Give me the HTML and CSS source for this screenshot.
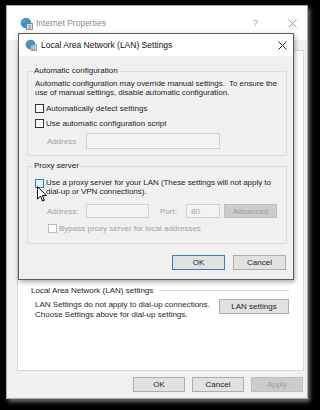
FILE: index.html
```html
<!DOCTYPE html>
<html lang="en">
<head>
    <meta charset="UTF-8">
    <title>Internet Properties</title>
    <link rel="stylesheet" href="styles.css">
</head>
<body>
    <div class="props">
        <div class="props-title">
            <svg class="app-icon" width="13" height="13" viewBox="0 0 13 13">
                <circle cx="6" cy="6" r="5.3" fill="#3d8fd6"/>
                <path d="M2 4 Q4 2 6 3 Q5 5 3 6 Z M6 7 Q8 6 9 8 Q8 10 6 10 Z" fill="#5fb84a"/>
                <rect x="6.5" y="6.5" width="6" height="6" fill="#e8e8e8" stroke="#7a7a7a" stroke-width="0.8"/>
                <path d="M7.8 8.3h3.4M7.8 9.8h3.4M7.8 11.2h3.4" stroke="#7a7a7a" stroke-width="0.7"/>
            </svg>
            <span class="props-name">Internet Properties</span>
            <span class="help">?</span>
            <svg class="close-x" width="9" height="9" viewBox="0 0 9 9">
                <path d="M0.5 0.5 8.5 8.5M8.5 0.5 0.5 8.5" stroke="#9a9a9a" stroke-width="1"/>
            </svg>
        </div>
        <div class="tab-strip"></div>
        <div class="panel">
            <div class="section-head">
                <span>Local Area Network (LAN) settings</span>
                <span class="rule"></span>
            </div>
            <div class="lan-row">
                <p>LAN Settings do not apply to dial-up connections.<br>Choose Settings above for dial-up settings.</p>
                <button class="btn lan-btn">LAN settings</button>
            </div>
        </div>
        <div class="props-buttons">
            <button class="btn">OK</button>
            <button class="btn">Cancel</button>
            <button class="btn" disabled>Apply</button>
        </div>

        <div class="lan-dialog">
            <div class="dialog-title">
                <svg class="app-icon" width="12" height="12" viewBox="0 0 13 13">
                    <circle cx="6" cy="6" r="5.3" fill="#3d8fd6"/>
                    <path d="M2 4 Q4 2 6 3 Q5 5 3 6 Z M6 7 Q8 6 9 8 Q8 10 6 10 Z" fill="#5fb84a"/>
                    <rect x="6.5" y="6.5" width="6" height="6" fill="#e8e8e8" stroke="#7a7a7a" stroke-width="0.8"/>
                    <path d="M7.8 8.3h3.4M7.8 9.8h3.4M7.8 11.2h3.4" stroke="#7a7a7a" stroke-width="0.7"/>
                </svg>
                <span class="dialog-name">Local Area Network (LAN) Settings</span>
                <svg class="close-x" width="9" height="9" viewBox="0 0 9 9">
                    <path d="M0.5 0.5 8.5 8.5M8.5 0.5 0.5 8.5" stroke="#222" stroke-width="1"/>
                </svg>
            </div>
            <div class="dialog-body">
                <fieldset class="group auto-group">
                    <legend>Automatic configuration</legend>
                    <p class="note">Automatic configuration may override manual settings.&nbsp; To ensure the<br>use of manual settings, disable automatic configuration.</p>
                    <label class="check-row first-check"><span class="box"></span>Automatically detect settings</label>
                    <label class="check-row"><span class="box"></span>Use automatic configuration script</label>
                    <div class="field-row">
                        <span class="field-label muted">Address</span>
                        <span class="input wide"></span>
                    </div>
                </fieldset>

                <fieldset class="group proxy-group">
                    <legend>Proxy server</legend>
                    <label class="check-row two-line"><span class="box hover"></span><span>Use a proxy server for your LAN (These settings will not apply to<br>dial-up or VPN connections).</span></label>
                    <div class="field-row proxy-row">
                        <span class="field-label muted">Address:</span>
                        <span class="input short"></span>
                        <span class="port-label muted">Port:</span>
                        <span class="input port muted">80</span>
                        <button class="btn adv-btn" disabled>Advanced</button>
                    </div>
                    <label class="check-row bypass muted"><span class="box faded"></span>Bypass proxy server for local addresses</label>
                </fieldset>

                <div class="dialog-buttons">
                    <button class="btn default">OK</button>
                    <button class="btn">Cancel</button>
                </div>
            </div>
        </div>

        <svg class="cursor" width="11" height="17" viewBox="0 0 11 17">
            <path d="M0.5 0.5 L0.5 13 L3.5 10.2 L5.6 15 L7.4 14.2 L5.3 9.6 L9.4 9.6 Z" fill="#fff" stroke="#000" stroke-width="1" stroke-linejoin="round"/>
        </svg>
    </div>
</body>
</html>
```

FILE: styles.css
```css
* {
    margin: 0;
    padding: 0;
    box-sizing: border-box;
}

body {
    background: #000;
    width: 320px;
    height: 410px;
    overflow: hidden;
    font-family: 'Liberation Sans', Arial, sans-serif;
    font-size: 8px;
    color: #1e1e1e;
}

.props {
    position: relative;
    margin: 5px 0 0 6px;
    width: 302px;
    height: 394px;
    background: #f0f0f0;
    border: 1px solid #a8a8a8;
    box-shadow: 2px 3px 4px rgba(150, 150, 150, 0.7);
    display: flex;
    flex-direction: column;
}

.props-title {
    height: 34px;
    display: flex;
    align-items: center;
    padding: 0 10px 0 13px;
    background: #fff;
}

.props-name {
    margin-left: 3px;
    font-size: 8.5px;
    color: #8a8a8a;
    flex: 1;
}

.help {
    font-size: 9px;
    color: #9a9a9a;
    margin-right: 30px;
}

.tab-strip {
    height: 10px;
}

.panel {
    flex: 1;
    margin: 0 3px 0 10px;
    background: #fff;
    border: 1px solid #d9d9d9;
    padding: 234px 14px 0 13px;
}

.section-head {
    display: flex;
    align-items: center;
    height: 10px;
}

.section-head .rule {
    flex: 1;
    height: 1px;
    background: #d5d5d5;
    margin-left: 6px;
}

.lan-row {
    display: flex;
    align-items: flex-start;
    margin-top: 4px;
    padding-left: 4px;
}

.lan-row p {
    flex: 1;
    line-height: 10px;
    padding-top: 1px;
}

.btn {
    font-family: inherit;
    font-size: 8px;
    color: #1e1e1e;
    height: 15px;
    background: #e1e1e1;
    border: 1px solid #adadad;
}

.btn:disabled {
    background: #cccccc;
    border-color: #bfbfbf;
    color: #9b9b9b;
}

.btn.default {
    border-color: #2f7fd0;
}

.lan-btn {
    width: 70px;
}

.props-buttons {
    display: flex;
    justify-content: flex-end;
    gap: 7px;
    padding: 6px 4px 6px 0;
}

.props-buttons .btn {
    width: 52px;
}

.lan-dialog {
    position: absolute;
    left: 11px;
    top: 27px;
    width: 276px;
    height: 247px;
    background: #f0f0f0;
    border: 1px solid #5a5a5a;
    box-shadow: 1px 2px 5px rgba(0, 0, 0, 0.35);
}

.dialog-title {
    height: 22px;
    background: #fff;
    display: flex;
    align-items: center;
    padding: 0 6px 0 6px;
}

.dialog-name {
    flex: 1;
    margin-left: 4px;
    font-size: 8.5px;
    color: #111;
}

.dialog-body {
    padding: 10px 6px 0 8px;
}

.group {
    border: 1px solid #dcdcdc;
    padding: 0 6px 6px 7px;
}

.group legend {
    padding: 0 1px;
    margin-left: -2px;
    line-height: 10px;
    color: #222;
}

.note {
    line-height: 9px;
    margin-top: 3px;
    white-space: nowrap;
    letter-spacing: -0.05px;
}

.check-row {
    display: flex;
    align-items: center;
    height: 10px;
    margin-top: 5px;
}

.check-row.first-check {
    margin-top: 6px;
}

.box {
    width: 9px;
    height: 9px;
    border: 1px solid #333;
    background: #fff;
    margin-right: 2px;
    flex: none;
}

.box.hover {
    border-color: #2f7fd0;
    background: #e5f1fb;
}

.box.faded {
    border-color: #bcbcbc;
}

.field-row {
    display: flex;
    align-items: center;
    margin-top: 5px;
    padding-left: 12px;
}

.field-label {
    width: 39px;
}

.muted {
    color: #a2a2a2;
}

.input {
    height: 16px;
    border: 1px solid #d2d2d2;
    background: #f3f3f3;
    display: flex;
    align-items: center;
    padding-left: 4px;
}

.input.wide {
    width: 134px;
}

.input.short {
    width: 63px;
    height: 14px;
}

.port-label {
    margin-left: 11px;
    width: 26px;
}

.input.port {
    width: 34px;
    height: 14px;
}

.adv-btn {
    width: 53px;
    margin-left: 4px;
    height: 14px;
}

.check-row.two-line {
    height: 18px;
    margin-top: 7px;
    align-items: flex-start;
    line-height: 9px;
    white-space: nowrap;
    letter-spacing: -0.05px;
}

.two-line .box {
    margin-top: 1px;
}

.proxy-row {
    margin-top: 8px;
}

.check-row.bypass {
    margin-top: 5px;
    padding-left: 13px;
}

.proxy-group {
    margin-top: 5px;
    padding-bottom: 10px;
}

.dialog-buttons {
    display: flex;
    justify-content: flex-end;
    gap: 8px;
    margin-top: 11px;
    padding-right: 1px;
}

.dialog-buttons .btn {
    width: 53px;
}

.cursor {
    position: absolute;
    left: 30px;
    top: 180px;
}
```
